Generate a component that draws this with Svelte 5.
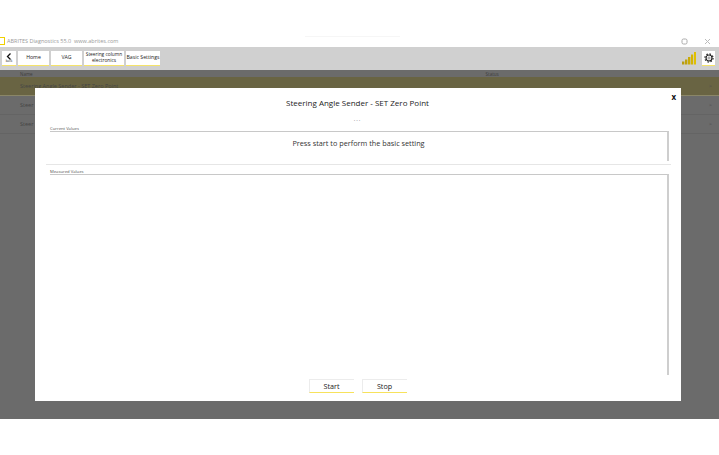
<script>
  const nav = [
    { label: 'Home', width: 31 },
    { label: 'VAG', width: 31 },
    { label: 'Steering column electronics', width: 40, wrap: true },
    { label: 'Basic Settings', width: 34 },
  ]
  // the modal covers everything but the start of the lower rows
  const rows = [
    { name: 'Steering Angle Sender - SET Zero Point', selected: true },
    { name: 'Steer' },
    { name: 'Steer' },
  ]
</script>

<div class="page">
  <div class="window">
    <header class="titlebar">
      <span class="logo"></span>
      <span class="app-name">ABRITES Diagnostics 55.0 &nbsp;www.abrites.com</span>
      <span class="title-shade"></span>
      <span class="win-controls">
        <svg width="7" height="7" viewBox="0 0 7 7"><rect x="1" y="1" width="5" height="5" rx="1.5" fill="none" stroke="#aaa"/></svg>
        <svg width="7" height="7" viewBox="0 0 7 7"><path d="M1 1l5 5M6 1l-5 5" stroke="#bbb" fill="none"/></svg>
      </span>
    </header>

    <nav class="toolbar">
      <button class="tool back">
        <svg width="6" height="7" viewBox="0 0 6 7"><path d="M4.5 .5L1.5 3.5l3 3" fill="none" stroke="#111" stroke-width="1.3"/></svg>
        <span>back</span>
      </button>
      {#each nav as item}
        <button class="tool" class:wrap={item.wrap} style:width="{item.width}px">{item.label}</button>
      {/each}
      <span class="spacer"></span>
      <svg class="signal" width="14" height="13" viewBox="0 0 14 13">
        <rect x="0" y="9.5" width="2.4" height="3" fill="#b89c10"/>
        <rect x="3" y="7.5" width="2.4" height="5" fill="#bfa20c"/>
        <rect x="6" y="5" width="2.4" height="7.5" fill="#c9aa08"/>
        <rect x="9" y="2.5" width="2.2" height="10" fill="#d4b404"/>
        <rect x="12" y="0" width="2" height="12.5" fill="#e0c000"/>
      </svg>
      <button class="tool gear" aria-label="Settings">
        <svg width="10" height="10" viewBox="0 0 12 12">
          <circle cx="6" cy="6" r="3.6" fill="none" stroke="#222" stroke-width="1.4"/>
          <circle cx="6" cy="6" r="4.9" fill="none" stroke="#222" stroke-width="1.4" stroke-dasharray="1.8 2.05"/>
          <circle cx="6" cy="6" r="1.3" fill="none" stroke="#555" stroke-width=".7"/>
        </svg>
      </button>
    </nav>

    <main class="content">
      <div class="list-head">
        <span>Name</span>
        <span class="status-col">Status</span>
      </div>
      {#each rows as row}
        <div class="row" class:selected={row.selected}>
          <span>{row.name}</span>
          <span class="chevron">&gt;</span>
        </div>
      {/each}

      <section class="modal">
        <button class="close">x</button>
        <h1>Steering Angle Sender - SET Zero Point</h1>
        <p class="dots">...</p>

        <div class="group current">
          <div class="group-label">Current Values</div>
          <div class="group-box">
            <p class="message">Press start to perform the basic setting</p>
          </div>
        </div>

        <div class="group measured">
          <div class="group-label">Measured Values</div>
          <div class="group-box"></div>
        </div>

        <div class="actions">
          <button class="action">Start</button>
          <button class="action">Stop</button>
        </div>
      </section>
    </main>
  </div>
</div>

<style>
  :global(body) {
    background: #fff;
  }

  .page {
    width: 719px;
    height: 455px;
    padding-top: 35px;
    box-sizing: border-box;
    overflow: hidden;
    background: #fff;
    font-family: "Open Sans", "Noto Sans", sans-serif;
    color: #222;
  }

  .window {
    display: flex;
    flex-direction: column;
    height: 384px;
  }

  .titlebar {
    position: relative;
    display: flex;
    align-items: center;
    height: 12px;
    font-size: 5.5px;
    color: #9a9a9a;
  }

  .title-shade {
    position: absolute;
    left: 305px;
    top: 1px;
    width: 95px;
    height: 1px;
    background: #f6f6f6;
  }

  .logo {
    width: 5px;
    height: 8px;
    margin-right: 2px;
    border: 1px solid #f0d000;
    border-left: none;
    box-sizing: border-box;
  }

  .win-controls {
    display: flex;
    gap: 16px;
    margin-left: auto;
    margin-right: 8px;
    margin-top: 1px;
  }

  .toolbar {
    display: flex;
    align-items: center;
    gap: 2px;
    height: 23px;
    padding: 0 4px 1px 2px;
    box-sizing: border-box;
    background: #d0d0d0;
  }

  .tool {
    display: flex;
    align-items: center;
    justify-content: center;
    height: 15px;
    padding: 0;
    border: none;
    border-bottom: 1px solid #f5e36a;
    background: #fff;
    font: inherit;
    font-size: 5.2px;
    line-height: 5.5px;
    color: #222;
    text-align: center;
    white-space: nowrap;
  }

  .tool.wrap {
    font-size: 4.8px;
    white-space: normal;
  }

  .back {
    flex-direction: column;
    width: 14px;
    font-size: 3px;
    line-height: 3px;
  }

  .spacer {
    flex: 1;
  }

  .signal {
    margin-right: 4px;
  }

  .gear {
    width: 13px;
  }

  .content {
    position: relative;
    flex: 1;
    background: #6b6b6b;
    color: #454545;
    font-size: 5.5px;
  }

  .list-head {
    display: flex;
    height: 7px;
    padding-left: 20px;
    align-items: center;
    font-size: 4.5px;
    color: #3e3e3e;
  }

  .status-col {
    margin-left: 453px;
  }

  .row {
    display: flex;
    align-items: center;
    justify-content: space-between;
    height: 18px;
    padding: 0 7px 0 20px;
    border-bottom: 1px solid #646464;
  }

  .row.selected {
    background: #696443;
    border-bottom-color: #8a8668;
  }

  .chevron {
    color: #4d4d4d;
  }

  .modal {
    position: absolute;
    left: 35px;
    top: 18px;
    width: 646px;
    height: 313px;
    background: #fff;
    box-sizing: border-box;
    color: #222;
    display: flex;
    flex-direction: column;
    padding: 9px 12px 8px 11px;
  }

  .close {
    position: absolute;
    top: 4px;
    right: 5px;
    padding: 0;
    border: none;
    background: none;
    font: inherit;
    font-size: 8px;
    font-weight: 700;
    line-height: 10px;
    color: #111;
  }

  h1 {
    margin: 0;
    font-size: 8px;
    font-weight: 400;
    line-height: 12px;
    text-align: center;
    color: #1c1c1c;
  }

  .dots {
    margin: 6px 0 0;
    font-size: 6px;
    letter-spacing: 1px;
    line-height: 8px;
    text-align: center;
    color: #666;
  }

  .group-label {
    margin-left: 4px;
    font-size: 4.2px;
    line-height: 5px;
    color: #555;
  }

  .group-box {
    margin-left: 4px;
    border-top: 1px solid #c8c8c8;
    border-right: 2px solid #cecece;
  }

  .current {
    margin-top: 3px;
    margin-right: -2px;
    padding-right: 2px;
    padding-bottom: 3px;
    border-bottom: 1px solid #e6e6e6;
  }

  .current .group-box {
    height: 29px;
  }

  .message {
    margin: 0;
    padding-top: 6px;
    font-size: 7.3px;
    line-height: 11px;
    text-align: center;
    color: #333;
  }

  .measured {
    margin-top: 4px;
  }

  .measured .group-box {
    height: 200px;
  }

  .actions {
    display: flex;
    justify-content: center;
    gap: 8px;
    margin-top: 4px;
  }

  .action {
    width: 45px;
    height: 14px;
    padding: 0;
    border: none;
    border-top: 1px solid #ececec;
    border-left: 1px solid #ececec;
    border-bottom: 1px solid #f7e25c;
    background: #fff;
    font: inherit;
    font-size: 7.2px;
    line-height: 12px;
    color: #222;
  }
</style>
